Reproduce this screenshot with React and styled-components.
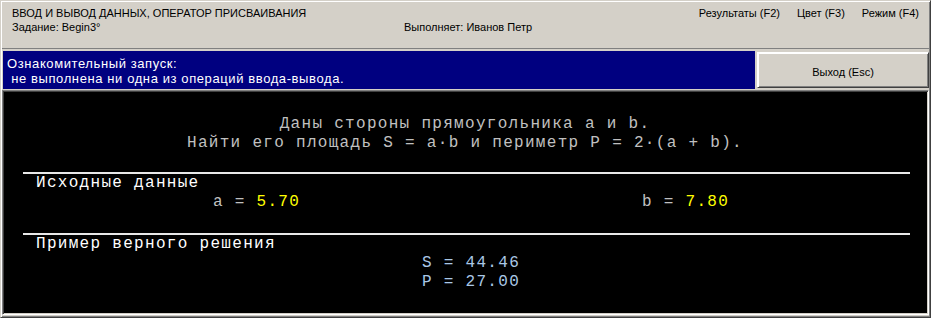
import React from "react";
import styled, { createGlobalStyle } from "styled-components";

const Global = createGlobalStyle`
  html, body { margin: 0; padding: 0; background: #d4d0c8; }
  #root { width: 931px; height: 318px; }
`;

const Window = styled.div`
  box-sizing: border-box;
  width: 931px;
  height: 318px;
  background: #d4d0c8;
  border: 1px solid;
  border-color: #d4d0c8 #404040 #404040 #d4d0c8;
  box-shadow: inset 1px 1px #ffffff, inset -1px -1px #808080;
  padding: 1px 1px 2px 1px;
  display: flex;
  flex-direction: column;
  font-family: "Liberation Sans", Arial, sans-serif;
`;

const Header = styled.header`
  height: 47px;
  box-sizing: border-box;
  padding: 4px 10px 0 10px;
  border-bottom: 1px solid #808080;
  font-size: 11px;
  line-height: 14px;
  color: #000;
  display: grid;
  grid-template-columns: 392px 1fr;
  grid-template-rows: 14px 14px;
  align-content: start;
`;

const Title = styled.div`
  grid-column: 1 / 3;
  grid-row: 1;
  white-space: nowrap;
`;

const Menu = styled.nav`
  grid-column: 2;
  grid-row: 1;
  justify-self: end;
  display: flex;
  gap: 17px;
`;

const MenuItem = styled.span`
  white-space: nowrap;
`;

const Info = styled.div`
  grid-row: 2;
  white-space: nowrap;
`;

const StatusRow = styled.div`
  margin-top: 2px;
  height: 38px;
  display: flex;
  align-items: stretch;
  gap: 1px;
`;

const StatusPanel = styled.div`
  margin-left: 1px;
  width: 752px;
  box-sizing: border-box;
  background: #000080;
  color: #ffffff;
  font-size: 13px;
  line-height: 15px;
  letter-spacing: 0.6px;
  padding: 5px 0 0 4px;
  white-space: pre;
`;

const ExitButton = styled.button`
  flex: 1;
  margin: 1px 0 1px 1px;
  box-sizing: border-box;
  background: #d4d0c8;
  border: 1px solid;
  border-color: #ffffff #404040 #404040 #ffffff;
  box-shadow: inset 1px 1px #ffffff, inset -1px -1px #808080;
  font-family: "Liberation Sans", Arial, sans-serif;
  font-size: 11px;
  line-height: 14px;
  color: #000;
  padding: 3px 0 0 0;
  cursor: default;
`;

const Screen = styled.main`
  margin-top: 1px;
  flex: 1;
  box-sizing: border-box;
  background: #000;
  border: 1px solid;
  border-color: #808080 #ffffff #ffffff #808080;
  box-shadow: inset 1px 1px #404040, inset -1px -1px #d4d0c8;
  padding: 24px 2px 0 2px;
  font-family: "Liberation Mono", "Courier New", monospace;
  font-size: 16px;
  letter-spacing: 1.3px;
  line-height: 19px;
  white-space: pre;
`;

const TaskText = styled.div`
  color: #c0c0c0;
  text-align: center;
  padding-right: 1px;
`;

const Rule = styled.hr`
  margin: ${(p) => p.$top}px 16px 0 18px;
  border: none;
  height: 2px;
  background: #e8e8e8;
`;

const SectionLabel = styled.div`
  color: #ffffff;
  padding-left: 31px;
`;

const DataArea = styled.div`
  margin: 0 26px 0 37px;
  display: grid;
  grid-template-columns: ${(p) => (p.$cols === 2 ? "1fr 1fr" : "1fr")};
  text-align: center;
`;

const Label = styled.span`
  color: #c0c0c0;
`;

const Value = styled.span`
  color: #ffff00;
`;

const Result = styled.div`
  color: #aac8e6;
`;

export default function App() {
  return (
    <>
      <Global />
      <Window>
        <Header>
          <Title>ВВОД И ВЫВОД ДАННЫХ, ОПЕРАТОР ПРИСВАИВАНИЯ</Title>
          <Menu>
            <MenuItem>Результаты (F2)</MenuItem>
            <MenuItem>Цвет (F3)</MenuItem>
            <MenuItem>Режим (F4)</MenuItem>
          </Menu>
          <Info>Задание: Begin3°</Info>
          <Info>Выполняет: Иванов Петр</Info>
        </Header>
        <StatusRow>
          <StatusPanel>
            {"Ознакомительный запуск:\n не выполнена ни одна из операций ввода-вывода."}
          </StatusPanel>
          <ExitButton>Выход (Esc)</ExitButton>
        </StatusRow>
        <Screen>
          <TaskText>Даны стороны прямоугольника a и b.</TaskText>
          <TaskText>Найти его площадь S = a·b и периметр P = 2·(a + b).</TaskText>
          <Rule $top={19} />
          <SectionLabel>Исходные данные</SectionLabel>
          <DataArea $cols={2}>
            <div>
              <Label>a = </Label>
              <Value>5.70</Value>
            </div>
            <div>
              <Label>b = </Label>
              <Value>7.80</Value>
            </div>
          </DataArea>
          <Rule $top={21} />
          <SectionLabel>Пример верного решения</SectionLabel>
          <DataArea $cols={1}>
            <Result>S = 44.46</Result>
            <Result>P = 27.00</Result>
          </DataArea>
        </Screen>
      </Window>
    </>
  );
}
